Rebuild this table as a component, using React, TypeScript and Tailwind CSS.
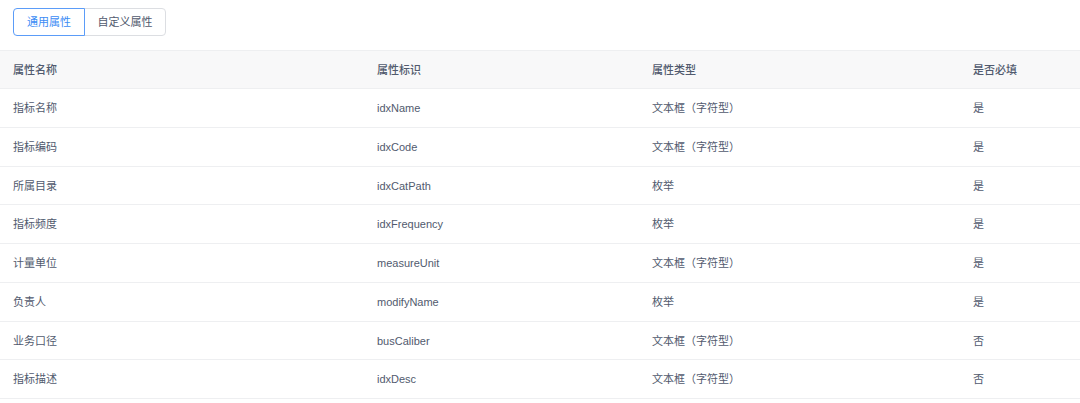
import { useState } from 'react'

const rows = [
  { name: '指标名称', key: 'idxName', type: '文本框（字符型）', required: '是' },
  { name: '指标编码', key: 'idxCode', type: '文本框（字符型）', required: '是' },
  { name: '所属目录', key: 'idxCatPath', type: '枚举', required: '是' },
  { name: '指标频度', key: 'idxFrequency', type: '枚举', required: '是' },
  { name: '计量单位', key: 'measureUnit', type: '文本框（字符型）', required: '是' },
  { name: '负责人', key: 'modifyName', type: '枚举', required: '是' },
  { name: '业务口径', key: 'busCaliber', type: '文本框（字符型）', required: '否' },
  { name: '指标描述', key: 'idxDesc', type: '文本框（字符型）', required: '否' },
]

const cols = 'grid grid-cols-[364px_275px_321px_1fr]'

export default function App() {
  const [tab, setTab] = useState(0)
  const tabs = ['通用属性', '自定义属性']

  return (
    <div
      className="w-[1080px] h-[403px] overflow-hidden bg-white text-[11px] text-[#515a6e]"
      style={{ fontFamily: '"Liberation Sans", "Noto Sans CJK SC", sans-serif' }}
    >
      <div className="pt-[8px] pl-[13px] flex">
        {tabs.map((t, i) => (
          <button
            key={t}
            onClick={() => setTab(i)}
            className={`h-[28px] text-[11px] ${i === 0 ? 'w-[72px] rounded-l-[4px]' : 'w-[82px] rounded-r-[4px] -ml-px'} border ${
              tab === i
                ? 'border-[#5b9cf8] text-[#3c8cf5] relative z-10'
                : 'border-[#dcdee2] text-[#515a6e]'
            }`}
          >
            {t}
          </button>
        ))}
      </div>

      <div className="mt-[14px]">
        <div className={`${cols} h-[39px] items-center pt-px bg-[#f8f8f9] border-t border-b border-[#eeeff1] font-medium`}>
          <div className="pl-[13px]">属性名称</div>
          <div className="pl-[13px]">属性标识</div>
          <div className="pl-[13px]">属性类型</div>
          <div className="pl-[13px]">是否必填</div>
        </div>
        {rows.map((r) => (
          <div key={r.key} className={`${cols} h-[38.75px] items-center pt-px border-b border-[#eeeff1]`}>
            <div className="pl-[13px]">{r.name}</div>
            <div className="pl-[13px]">{r.key}</div>
            <div className="pl-[13px]">{r.type}</div>
            <div className="pl-[13px]">{r.required}</div>
          </div>
        ))}
      </div>
    </div>
  )
}
